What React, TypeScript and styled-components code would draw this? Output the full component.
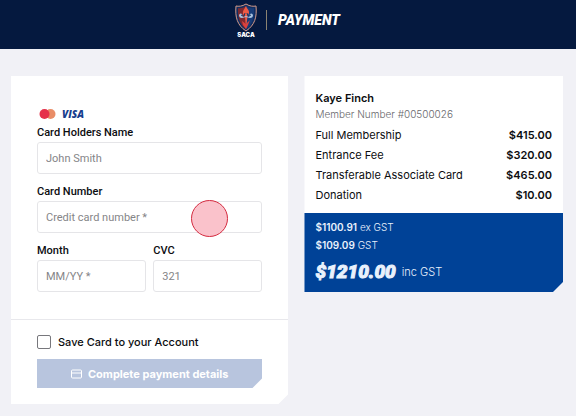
import React from "react";
import styled, { createGlobalStyle } from "styled-components";

const GlobalStyle = createGlobalStyle`
  * { box-sizing: border-box; }
  body {
    margin: 0;
    background: #f1f1f6;
    color: #0c0d10;
    font-family: Inter, "Liberation Sans", sans-serif;
    font-size: 12px;
  }
`;

const Header = styled.header`
  display: flex;
  align-items: flex-start;
  justify-content: center;
  gap: 8px;
  height: 49px;
  padding: 3px 2px 0 0;
  background: #05193f;
`;

const Title = styled.h1`
  display: flex;
  align-items: center;
  height: 20px;
  margin: 7px 0 0;
  padding-left: 11px;
  border-left: 1px solid #8c8472;
  color: #fff;
  font-family: Roboto, sans-serif;
  font-size: 14px;
  font-weight: 900;
  font-style: italic;
`;

const Main = styled.main`
  display: grid;
  grid-template-columns: 278fr 259fr;
  align-items: start;
  gap: 16px;
  padding: 27px 13px 12px 11px;
`;

const PaymentForm = styled.form`
  background: #fff;
  clip-path: polygon(0 0, 100% 0, 100% calc(100% - 10px), calc(100% - 10px) 100%, 0 100%);
`;

const CardFields = styled.div`
  display: grid;
  grid-template-columns: 1fr 1fr;
  column-gap: 7px;
  row-gap: 9px;
  padding: 32px 26px 27px;
  border-bottom: 1px solid #e8e8ec;
`;

const Field = styled.div<{ $wide?: boolean }>`
  position: relative;
  grid-column: ${({ $wide }) => ($wide ? "1 / -1" : "auto")};
  min-width: 0;
`;

const Brands = styled.div`
  display: flex;
  align-items: center;
  gap: 6px;
  height: 12px;
  margin-bottom: 4px;
  padding-left: 2px;
`;

const Label = styled.label`
  display: block;
  font-family: Roboto, sans-serif;
  font-size: 11px;
  font-weight: 500;
  line-height: 18px;
`;

const TextInput = styled.input`
  display: block;
  width: 100%;
  height: 32px;
  padding: 0 8px;
  border: 1px solid #e5e5e8;
  border-radius: 3px;
  background: #fff;
  color: #222;
  font-family: Roboto, sans-serif;
  font-size: 11px;
  &::placeholder { color: #858588; opacity: 1; }
`;

const TouchMarker = styled.span`
  position: absolute;
  right: 34px;
  bottom: -4px;
  width: 37px;
  height: 37px;
  border: 1px solid #d42b40;
  border-radius: 50%;
  background: #fac2cb;
  pointer-events: none;
`;

const Actions = styled.div`
  display: flex;
  flex-direction: column;
  gap: 10px;
  padding: 15px 26px 16px;
`;

const SaveOption = styled.label`
  display: flex;
  align-items: center;
  gap: 7px;
  font-size: 11px;
  font-weight: 500;
  line-height: 14px;
`;

const Checkbox = styled.input`
  appearance: none;
  width: 14px;
  height: 14px;
  margin: 0;
  border: 1px solid #77777c;
  border-radius: 2px;
  background: #fff;
  &:checked { background: #004297; }
`;

const SubmitButton = styled.button`
  display: flex;
  align-items: center;
  justify-content: center;
  gap: 6px;
  height: 29px;
  padding: 0;
  border: 0;
  background: #b8c5de;
  color: #fff;
  font: inherit;
  font-size: 11px;
  font-weight: 700;
  clip-path: polygon(0 0, 100% 0, 100% calc(100% - 10px), calc(100% - 10px) 100%, 0 100%);
`;

const Summary = styled.section`
  background: #fff;
  clip-path: polygon(0 0, 100% 0, 100% calc(100% - 10px), calc(100% - 10px) 100%, 0 100%);
`;

const Member = styled.div`
  padding: 14px 11px 8px;
`;

const MemberName = styled.h2`
  margin: 0;
  font-size: 11px;
  font-weight: 600;
  line-height: 16px;
`;

const MemberNumber = styled.p`
  margin: 0 0 3px;
  color: #68686c;
  font-size: 10px;
  font-weight: 300;
  line-height: 16px;
`;

const FeeTable = styled.table`
  width: 100%;
  border-collapse: collapse;
  font-size: 11px;
  line-height: 20px;
`;

const FeeName = styled.th`
  padding: 0;
  font-weight: 400;
  text-align: left;
`;

const FeePrice = styled.td`
  padding: 0;
  font-weight: 600;
  text-align: right;
`;

const Totals = styled.div`
  padding: 5px 11px 8px;
  background: #004297;
  color: #e9f1fc;
`;

const TaxLine = styled.p`
  margin: 0;
  font-size: 10px;
  font-weight: 300;
  line-height: 18px;
`;

const Amount = styled.strong`
  font-weight: 600;
`;

const GrandTotal = styled.p`
  display: flex;
  align-items: center;
  gap: 6px;
  margin: 6px 0 0;
  font-size: 11px;
  font-weight: 300;
  line-height: 24px;
`;

const GrandAmount = styled.strong`
  font-family: Roboto, sans-serif;
  font-size: 19px;
  font-weight: 900;
  font-style: italic;
  -webkit-text-stroke: 1px currentColor;
`;

const Crest = () => (
  <svg width="24" height="36" viewBox="0 0 24 36" role="img" aria-label="SACA">
    <path d="M12 1C8 3.500 4.500 3.500 2 3C1 14 3 22 12 28C21 22 23 14 22 3C19.500 3.500 16 3.500 12 1Z" fill="#102d61" stroke="#d39a89" />
    <path d="M12 3C9 5 6 5.500 4 5C3.500 13 5 21 12 26Z" fill="#7d2930" />
    <path d="M12 3C15 5 18 5.500 20 5C20.500 13 19 21 12 26Z" fill="#173c78" />
    <path d="M12 3C10 7 8.500 7.500 9 11L11 13L12 26L13.500 13L15 10C15.500 7 13 6 12 3Z" fill="#ed5b46" />
    <path d="M5 12Q6 9.500 8 11L9 14L12 13L15 14L16 11Q18 9.500 19 12Q19 15 16 15L12 14L8 15Q5 15 5 12Z" fill="#a9c3e0" />
    <path d="M7 12L9 13M17 12L15 13M11 10L10 13M13 10L14 13" stroke="#193866" />
    <path d="M8 18L12 21L16 17L14 22L12 26L9 22Z" fill="#db403d" />
    <text x="12" y="34" textAnchor="middle" fill="#fff" fontFamily="Inter, sans-serif" fontSize="6" fontWeight="900">SACA</text>
  </svg>
);

const Mastercard = () => (
  <svg width="17" height="12" viewBox="0 0 17 12" role="img" aria-label="Mastercard">
    <circle cx="11.500" cy="6" r="5" fill="#e98d67" />
    <circle cx="5.500" cy="6" r="5" fill="#e5304a" />
  </svg>
);

const Visa = () => (
  <svg width="28" height="16" viewBox="0 0 28 16" role="img" aria-label="Visa">
    <text x="0" y="12" fill="#173e8d" fontFamily="'Open Sans', sans-serif" fontSize="10" fontWeight="800" fontStyle="italic">VISA</text>
  </svg>
);

const CardIcon = () => (
  <svg width="11" height="10" viewBox="0 0 11 10" fill="none" stroke="#fff" aria-hidden="true">
    <rect x="0.500" y="1" width="10" height="8" rx="1" />
    <path d="M.5 4H10.500" />
  </svg>
);

const fees = [
  ["Full Membership", "$415.00"],
  ["Entrance Fee", "$320.00"],
  ["Transferable Associate Card", "$465.00"],
  ["Donation", "$10.00"],
];

export default function App() {
  return (
    <>
      <GlobalStyle />
      <Header>
        <Crest />
        <Title>PAYMENT</Title>
      </Header>
      <Main>
        <PaymentForm>
          <CardFields>
            <Field $wide>
              <Brands><Mastercard /><Visa /></Brands>
              <Label htmlFor="holder">Card Holders Name</Label>
              <TextInput id="holder" placeholder="John Smith" />
            </Field>
            <Field $wide>
              <Label htmlFor="number">Card Number</Label>
              <TextInput id="number" placeholder="Credit card number *" />
              <TouchMarker />
            </Field>
            <Field>
              <Label htmlFor="month">Month</Label>
              <TextInput id="month" placeholder="MM/YY *" />
            </Field>
            <Field>
              <Label htmlFor="cvc">CVC</Label>
              <TextInput id="cvc" placeholder="321" />
            </Field>
          </CardFields>
          <Actions>
            <SaveOption htmlFor="save">
              <Checkbox id="save" type="checkbox" />
              Save Card to your Account
            </SaveOption>
            <SubmitButton type="button"><CardIcon />Complete payment details</SubmitButton>
          </Actions>
        </PaymentForm>
        <Summary>
          <Member>
            <MemberName>Kaye Finch</MemberName>
            <MemberNumber>Member Number #00500026</MemberNumber>
            <FeeTable>
              <tbody>
                {fees.map(([name, price]) => (
                  <tr key={name}>
                    <FeeName scope="row">{name}</FeeName>
                    <FeePrice>{price}</FeePrice>
                  </tr>
                ))}
              </tbody>
            </FeeTable>
          </Member>
          <Totals>
            <TaxLine><Amount>$1100.91</Amount> ex GST</TaxLine>
            <TaxLine><Amount>$109.09</Amount> GST</TaxLine>
            <GrandTotal><GrandAmount>$1210.00</GrandAmount> inc GST</GrandTotal>
          </Totals>
        </Summary>
      </Main>
    </>
  );
}
